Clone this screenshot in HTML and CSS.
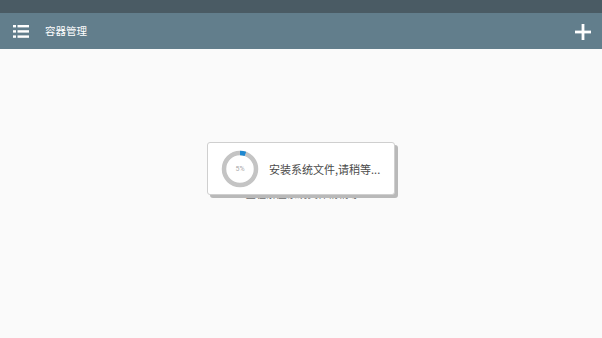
FILE: index.html
```html
<!DOCTYPE html>
<html lang="zh">
<head>
<meta charset="utf-8">
<link rel="stylesheet" href="styles.css">
</head>
<body>
<div class="status"></div>
<header class="toolbar">
  <svg class="menu" width="16" height="13" viewBox="0 0 16 13">
    <rect x="0" y="0" width="3" height="2.4" fill="#fff"/>
    <rect x="4.5" y="0" width="11.5" height="2.4" fill="#fff"/>
    <rect x="0" y="5.2" width="3" height="2.4" fill="#fff"/>
    <rect x="4.5" y="5.2" width="11.5" height="2.4" fill="#fff"/>
    <rect x="0" y="10.4" width="3" height="2.4" fill="#fff"/>
    <rect x="4.5" y="10.4" width="11.5" height="2.4" fill="#fff"/>
  </svg>
  <span class="title">容器管理</span>
  <svg class="plus" width="16" height="16" viewBox="0 0 16 16">
    <rect x="6.6" y="0" width="2.8" height="16" fill="#fff"/>
    <rect x="0" y="6.6" width="16" height="2.8" fill="#fff"/>
  </svg>
</header>
<main class="content">
  <div class="behind">正在解压系统文件请稍等</div>
  <div class="dialog">
    <div class="ring">
      <svg width="38" height="38" viewBox="0 0 38 38">
        <circle cx="19" cy="19" r="16" fill="none" stroke="#c4c4c4" stroke-width="4.5"/>
        <circle cx="19" cy="19" r="16" fill="none" stroke="#1e88d0" stroke-width="4.5" stroke-dasharray="5.5 100" transform="rotate(-90 19 19)"/>
      </svg>
      <span class="pct">5%</span>
    </div>
    <span class="msg">安装系统文件,请稍等...</span>
  </div>
</main>
</body>
</html>
```
FILE: styles.css
```css
* { box-sizing: border-box; }
html, body { margin: 0; padding: 0; }
body {
  width: 602px;
  height: 338px;
  overflow: hidden;
  background: #fafafa;
  font-family: "Noto Sans CJK SC", "Noto Sans", sans-serif;
  display: flex;
  flex-direction: column;
}
.status { height: 13px; background: #4a5b64; flex: none; }
.toolbar {
  height: 36px;
  flex: none;
  background: #627e8c;
  display: flex;
  align-items: center;
  padding: 0 11px 0 13px;
}
.menu { margin-top: 1px; }
.title {
  color: #fff;
  font-size: 10.5px;
  margin-left: 16px;
  margin-bottom: 1px;
  flex: 1;
}
.plus { margin-top: 1px; }
.content {
  flex: 1;
  position: relative;
}
.behind {
  position: absolute;
  left: 245px;
  top: 137px;
  width: 115px;
  text-align: center;
  white-space: nowrap;
  font-size: 10px;
  color: #6a6a6a;
  letter-spacing: 0.3px;
}
.dialog {
  position: absolute;
  left: 207px;
  top: 93px;
  width: 188px;
  height: 53px;
  background: #fff;
  border: 1px solid #cfcfcf;
  border-radius: 3px;
  box-shadow: 3px 3px 0 #b9b9b9;
  display: flex;
  align-items: center;
  padding-left: 13px;
}
.ring {
  position: relative;
  width: 38px;
  height: 38px;
  flex: none;
}
.ring svg { display: block; }
.pct {
  position: absolute;
  inset: 0;
  display: flex;
  align-items: center;
  justify-content: center;
  font-size: 7px;
  color: #aaa;
  font-family: "Roboto", sans-serif;
}
.msg {
  margin-left: 10px;
  font-size: 11px;
  color: #4a4a4a;
}
```
